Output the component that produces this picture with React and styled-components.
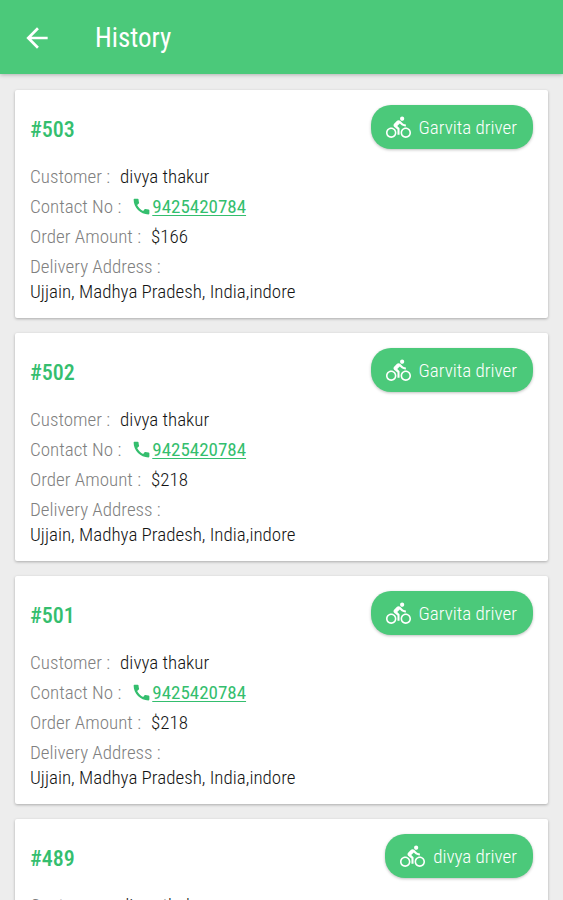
import React from "react";
import styled, { createGlobalStyle } from "styled-components";
import { MdArrowBack, MdCall, MdDirectionsBike } from "react-icons/md";

const green = "#4bc97a";
const darkGreen = "#34be6e";

const GlobalStyle = createGlobalStyle`
  *, *::before, *::after { box-sizing: border-box; }
  body {
    margin: 0;
    background: #ededed;
    color: #141414;
    font-family: "Roboto Condensed", "Liberation Sans Narrow", Roboto, sans-serif;
    font-size: 19px;
    font-weight: 300;
  }
`;

const AppBar = styled.header`
  display: flex;
  align-items: center;
  gap: 36px;
  height: 74px;
  padding: 2px 15px 0;
  background: ${green};
  color: #fff;
  box-shadow: 0 1px 4px rgba(0, 0, 0, 0.25);
`;

const BackButton = styled.button`
  display: flex;
  padding: 6px;
  border: 0;
  background: none;
  color: inherit;
  font-size: 32px;
  cursor: pointer;
`;

const Title = styled.h1`
  margin: 0;
  font-size: 27px;
  font-weight: 400;
  line-height: 32px;
`;

const OrderList = styled.main`
  display: flex;
  flex-direction: column;
  gap: 15px;
  padding: 16px 15px;
`;

const Card = styled.article`
  padding: 15px 15px 16px;
  border-radius: 2px;
  background: #fff;
  box-shadow: 0 1px 3px rgba(0, 0, 0, 0.28);
`;

const CardHeader = styled.div`
  display: flex;
  align-items: center;
  justify-content: space-between;
  margin-bottom: 13px;
`;

const OrderNumber = styled.h2`
  margin: 0;
  padding-top: 6px;
  color: ${darkGreen};
  font-size: 22px;
  font-weight: 500;
  line-height: 28px;
`;

const DriverButton = styled.button`
  display: flex;
  align-items: center;
  gap: 8px;
  height: 44px;
  padding: 2px 16px 0 15px;
  border: 0;
  border-radius: 20px;
  background: ${green};
  color: #fff;
  font: inherit;
  line-height: 24px;
  box-shadow: 0 1px 3px rgba(0, 0, 0, 0.25);
  cursor: pointer;

  svg {
    margin-bottom: 2px;
    font-size: 25px;
  }
`;

const Details = styled.dl`
  margin: 0;
`;

const Field = styled.div`
  display: flex;
  flex-wrap: wrap;
  gap: 0 10px;
  line-height: 30px;
`;

const Label = styled.dt`
  color: #808080;
`;

const Value = styled.dd`
  margin: 0;
`;

const Address = styled.dd`
  flex-basis: 100%;
  margin: 0;
  line-height: 20px;
`;

const PhoneLink = styled.a`
  display: flex;
  align-items: center;
  color: ${darkGreen};
  font-weight: 400;
  text-decoration: underline 1px;
  text-underline-offset: 2px;

  svg {
    margin-bottom: 2px;
    font-size: 21px;
  }
`;

const orders = [
  { id: 503, amount: 166, driver: "Garvita driver" },
  { id: 502, amount: 218, driver: "Garvita driver" },
  { id: 501, amount: 218, driver: "Garvita driver" },
  { id: 489, amount: 218, driver: "divya driver" },
];

function OrderCard({ order }) {
  return (
    <Card>
      <CardHeader>
        <OrderNumber>#{order.id}</OrderNumber>
        <DriverButton type="button">
          <MdDirectionsBike aria-hidden="true" />
          {order.driver}
        </DriverButton>
      </CardHeader>
      <Details>
        <Field>
          <Label>Customer :</Label>
          <Value>divya thakur</Value>
        </Field>
        <Field>
          <Label>Contact No :</Label>
          <Value>
            <PhoneLink href="tel:9425420784">
              <MdCall aria-hidden="true" />
              9425420784
            </PhoneLink>
          </Value>
        </Field>
        <Field>
          <Label>Order Amount :</Label>
          <Value>${order.amount}</Value>
        </Field>
        <Field>
          <Label>Delivery Address :</Label>
          <Address>Ujjain, Madhya Pradesh, India,indore</Address>
        </Field>
      </Details>
    </Card>
  );
}

export default function App() {
  return (
    <>
      <GlobalStyle />
      <AppBar>
        <BackButton type="button" aria-label="Back">
          <MdArrowBack />
        </BackButton>
        <Title>History</Title>
      </AppBar>
      <OrderList>
        {orders.map((order) => (
          <OrderCard key={order.id} order={order} />
        ))}
      </OrderList>
    </>
  );
}
